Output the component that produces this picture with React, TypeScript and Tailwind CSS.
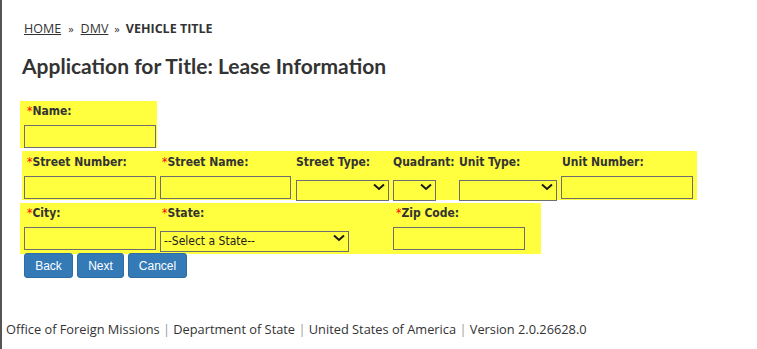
const labelCls =
  "block h-[18px] text-[12px] font-bold leading-[17px] text-[#333] [font-family:'DejaVu_Sans_Condensed','DejaVu_Sans',sans-serif] whitespace-nowrap";

function Req() {
  return <span className="text-[#ff0000] font-normal">*</span>;
}

function TextBox({ w }: { w: string }) {
  return <input type="text" className={`${w} h-[23px] border border-[#6e6e6e] bg-transparent outline-none`} />;
}

function Chevron() {
  return (
    <svg width="12" height="8" viewBox="0 0 12 8" className="pointer-events-none absolute right-[4px] top-[7px]">
      <path d="M1 1.5 L6 6 L11 1.5" fill="none" stroke="#1a1a1a" strokeWidth="2" />
    </svg>
  );
}

function Dropdown({ w, text }: { w: string; text?: string }) {
  return (
    <div className={`relative ${w} h-[21px] mt-[1px]`}>
      <select className="h-full w-full appearance-none border border-[#6e6e6e] bg-transparent pl-[3px] text-[12px] text-[#222] outline-none [font-family:'DejaVu_Sans_Condensed','DejaVu_Sans',sans-serif]">
        <option>{text ?? ""}</option>
      </select>
      <Chevron />
    </div>
  );
}

export default function App() {
  return (
    <div className="min-h-screen border-l-2 border-[#555] bg-white text-[#333]">
      {/* breadcrumb */}
      <div className="pl-[22px] pt-[21px] text-[12.5px] leading-[16px] [font-family:'Open_Sans',sans-serif] text-[#333]">
        <a className="underline">HOME</a>
        <span className="mx-[7px] text-[11px]">»</span>
        <a className="underline">DMV</a>
        <span className="mx-[6px] text-[11px]">»</span>
        <span className="font-bold">VEHICLE TITLE</span>
      </div>

      <h1 className="pl-[20px] pt-[16px] text-[21px] font-bold leading-[26px] text-[#333] [font-family:Lato,sans-serif]">
        Application for Title: Lease Information
      </h1>

      <form className="pl-[18px] pt-[22px]">
        {/* name */}
        <div className="flex w-[137px] flex-col bg-[#ffff40] pl-[4px] pt-[2px]">
          <label className={`${labelCls} pl-[3px]`}>
            <Req />Name:
          </label>
          <div className="pt-[3px]">
            <TextBox w="w-[132px]" />
          </div>
        </div>

        {/* street */}
        <div className="ml-[2px] mt-[3px] flex w-[675px] bg-[#ffff40] pl-[2px] pt-[3px] pb-[1px]">
          <div className="w-[136px]">
            <label className={`${labelCls} pl-[3px]`}>
              <Req />Street Number:
            </label>
            <div className="pt-[3px]"><TextBox w="w-[132px]" /></div>
          </div>
          <div className="w-[136px]">
            <label className={`${labelCls} pl-[2px]`}>
              <Req />Street Name:
            </label>
            <div className="pt-[3px]"><TextBox w="w-[131px]" /></div>
          </div>
          <div className="w-[97px]">
            <label className={labelCls}>Street Type:</label>
            <div className="pt-[3px]"><Dropdown w="w-[93px]" /></div>
          </div>
          <div className="w-[66px]">
            <label className={labelCls}>Quadrant:</label>
            <div className="pt-[3px]"><Dropdown w="w-[43px]" /></div>
          </div>
          <div className="w-[102px]">
            <label className={labelCls}>Unit Type:</label>
            <div className="pt-[3px]"><Dropdown w="w-[98px]" /></div>
          </div>
          <div className="w-[136px]">
            <label className={`${labelCls} pl-[1px]`}>Unit Number:</label>
            <div className="pt-[3px]"><TextBox w="w-[132px]" /></div>
          </div>
        </div>

        {/* city / state / zip */}
        <div className="mt-[3px] flex w-[521px] bg-[#ffff40] pl-[4px] pt-[2px] pb-[4px]">
          <div className="w-[136px]">
            <label className={`${labelCls} pl-[3px]`}>
              <Req />City:
            </label>
            <div className="pt-[3px]"><TextBox w="w-[132px]" /></div>
          </div>
          <div className="w-[233px]">
            <label className={`${labelCls} pl-[2px]`}>
              <Req />State:
            </label>
            <div className="pt-[3px]"><Dropdown w="w-[189px]" text="--Select a State--" /></div>
          </div>
          <div className="w-[148px]">
            <label className={`${labelCls} pl-[3px]`}>
              <Req />Zip Code:
            </label>
            <div className="pt-[3px]"><TextBox w="w-[132px]" /></div>
          </div>
        </div>

        {/* buttons */}
        <div className="-mt-[1px] flex gap-[4px] pl-[4px] [font-family:'Liberation_Sans',Arial,sans-serif]">
          <button type="button" className="h-[25px] w-[49px] rounded-[3px] border border-[#2e6da4] bg-[#337ab7] text-[12px] text-white">
            Back
          </button>
          <button type="button" className="h-[25px] w-[47px] rounded-[3px] border border-[#2e6da4] bg-[#337ab7] text-[12px] text-white">
            Next
          </button>
          <button type="button" className="h-[25px] w-[59px] rounded-[3px] border border-[#2e6da4] bg-[#337ab7] text-[12px] text-white">
            Cancel
          </button>
        </div>
      </form>

      {/* footer */}
      <div className="pl-[4px] pt-[43px] text-[12.8px] leading-[16px] text-[#333] [font-family:'Open_Sans',sans-serif]">
        Office of Foreign Missions <span className="text-[#999]">|</span> Department of State{" "}
        <span className="text-[#999]">|</span> United States of America <span className="text-[#999]">|</span> Version
        2.0.26628.0
      </div>
    </div>
  );
}
